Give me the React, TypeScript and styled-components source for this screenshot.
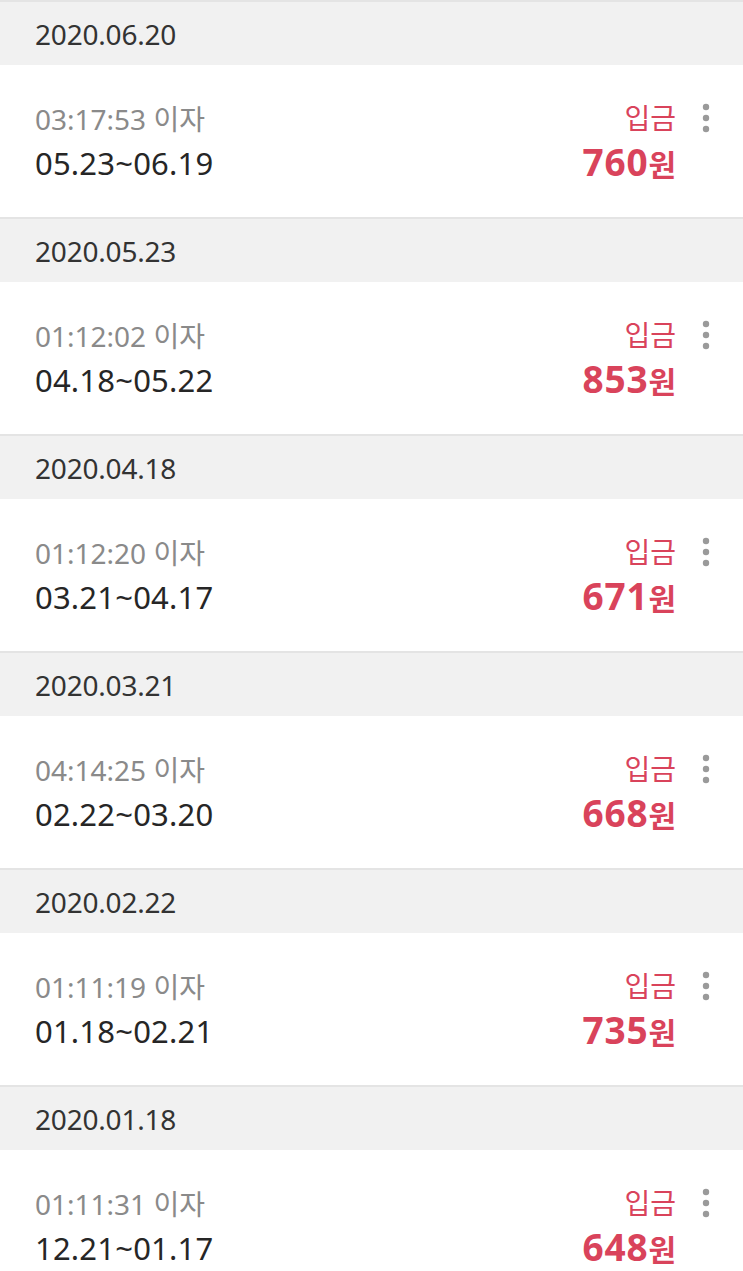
import { FC } from "react"
import styled, { createGlobalStyle } from "styled-components"

const GlobalStyle = createGlobalStyle`
  html, body {
    margin: 0;
    padding: 0;
    background: #ffffff;
  }
  body {
    font-family: "Noto Sans", "Noto Sans CJK KR", sans-serif;
  }
`

const List = styled.div`
  display: flex;
  flex-direction: column;
  width: 743px;
`

const Section = styled.section`
  display: flex;
  flex-direction: column;
  border-top: 2px solid #e4e4e4;
`

const DateHeader = styled.div`
  height: 63px;
  display: flex;
  align-items: center;
  padding: 0 35px;
  background: #f1f1f1;
  font-size: 28px;
  color: #333333;
  letter-spacing: -0.2px;
`

const Item = styled.div`
  height: 152px;
  display: flex;
  align-items: center;
  padding: 0 29px 0 35px;
  background: #ffffff;
  box-sizing: border-box;
`

const TextGroup = styled.div`
  flex: 1;
  display: flex;
  flex-direction: column;
`

const Time = styled.div`
  font-size: 28px;
  line-height: 44px;
  color: #8a8a8a;
`

const Range = styled.div`
  font-size: 31px;
  line-height: 44px;
  color: #262626;
  letter-spacing: 0.2px;
`

const AmountGroup = styled.div`
  display: flex;
  flex-direction: column;
  align-items: flex-end;
`

const Kind = styled.div`
  font-size: 28px;
  line-height: 44px;
  color: #d9435b;
`

const Amount = styled.div`
  font-size: 37px;
  line-height: 44px;
  font-weight: 700;
  color: #d9435b;
  letter-spacing: 0.8px;

  span {
    font-size: 30px;
    letter-spacing: 0;
  }
`

const MoreButton = styled.button`
  align-self: flex-start;
  margin-top: 38px;
  margin-left: 22px;
  width: 16px;
  padding: 0;
  border: 0;
  background: none;
  display: flex;
  justify-content: center;
`

type Entry = {
  date: string
  time: string
  range: string
  amount: number
}

const entries: Entry[] = [
  { date: "2020.06.20", time: "03:17:53", range: "05.23~06.19", amount: 760 },
  { date: "2020.05.23", time: "01:12:02", range: "04.18~05.22", amount: 853 },
  { date: "2020.04.18", time: "01:12:20", range: "03.21~04.17", amount: 671 },
  { date: "2020.03.21", time: "04:14:25", range: "02.22~03.20", amount: 668 },
  { date: "2020.02.22", time: "01:11:19", range: "01.18~02.21", amount: 735 },
  { date: "2020.01.18", time: "01:11:31", range: "12.21~01.17", amount: 648 },
]

const KebabIcon: FC = () => (
  <svg width="8" height="30" viewBox="0 0 8 30">
    <circle cx="4" cy="4" r="3.2" fill="#9a9a9a" />
    <circle cx="4" cy="15" r="3.2" fill="#9a9a9a" />
    <circle cx="4" cy="26" r="3.2" fill="#9a9a9a" />
  </svg>
)

const InterestRow: FC<{ entry: Entry }> = ({ entry }) => (
  <Section>
    <DateHeader>{entry.date}</DateHeader>
    <Item>
      <TextGroup>
        <Time>{entry.time} 이자</Time>
        <Range>{entry.range}</Range>
      </TextGroup>
      <AmountGroup>
        <Kind>입금</Kind>
        <Amount>
          {entry.amount}
          <span>원</span>
        </Amount>
      </AmountGroup>
      <MoreButton aria-label="더보기">
        <KebabIcon />
      </MoreButton>
    </Item>
  </Section>
)

export default function App() {
  return (
    <>
      <GlobalStyle />
      <List>
        {entries.map((e) => (
          <InterestRow key={e.date} entry={e} />
        ))}
      </List>
    </>
  )
}
